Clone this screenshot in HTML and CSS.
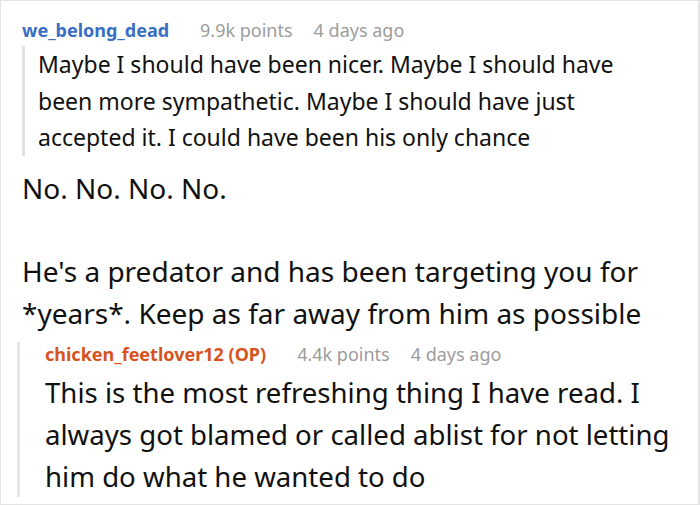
FILE: index.html
```html
<!DOCTYPE html>
<html>
<head>
<meta charset="utf-8">
<link rel="stylesheet" href="styles.css">
</head>
<body>
<div class="frame">
  <div class="comment">
    <div class="meta">
      <span class="user user-blue">we_belong_dead</span>
      <span class="info">9.9k points</span>
      <span class="info">4 days ago</span>
    </div>
    <blockquote class="quote">Maybe I should have been nicer. Maybe I should have been more sympathetic. Maybe I should have just accepted it. I could have been his only chance</blockquote>
    <div class="body">
      <p>No. No. No. No.</p>
      <p>He's a predator and has been targeting you for *years*. Keep as far away from him as possible</p>
    </div>
    <div class="reply">
      <div class="meta">
        <span class="user user-orange">chicken_feetlover12 (OP)</span>
        <span class="info">4.4k points</span>
        <span class="info">4 days ago</span>
      </div>
      <p class="reply-body">This is the most refreshing thing I have read. I always got blamed or called ablist for not letting him do what he wanted to do</p>
    </div>
  </div>
</div>
</body>
</html>
```
FILE: styles.css
```css
html, body {
  margin: 0;
  padding: 0;
  background: #fff;
}
.frame {
  box-sizing: border-box;
  width: 700px;
  height: 505px;
  border: 1px solid #e4e4e4;
  border-right-width: 2px;
  overflow: hidden;
  font-family: "Noto Sans", "Open Sans", sans-serif;
  color: #111;
}
.comment {
  padding: 17px 0 0 21px;
}
.meta {
  display: flex;
  gap: 31px;
  font-size: 18px;
  line-height: 24px;
  white-space: nowrap;
}
.user {
  font-weight: 700;
}
.user-blue { color: #3a6ec2; }
.user-orange { color: #d6531d; }
.info { color: #9c9c9c; }
.meta .info + .info { margin-left: -10px; }
.quote {
  margin: 4px 0 0 0;
  border-left: 3px solid #e2e2e2;
  padding-left: 13px;
  font-size: 23px;
  line-height: 36.7px;
  width: 600px;
}
.body {
  margin-top: 12px;
  font-size: 28px;
  line-height: 41.5px;
  width: 660px;
}
.body p {
  margin: 0 0 41.5px 0;
}
.body p:last-child { margin-bottom: 0; }
.reply {
  margin: 8px 0 0 -5px;
  border-left: 3px solid #e6e6e6;
  padding-left: 25px;
}
.reply-body {
  margin: 5px 0 0 0;
  font-size: 27.6px;
  line-height: 42px;
  width: 650px;
}
```
